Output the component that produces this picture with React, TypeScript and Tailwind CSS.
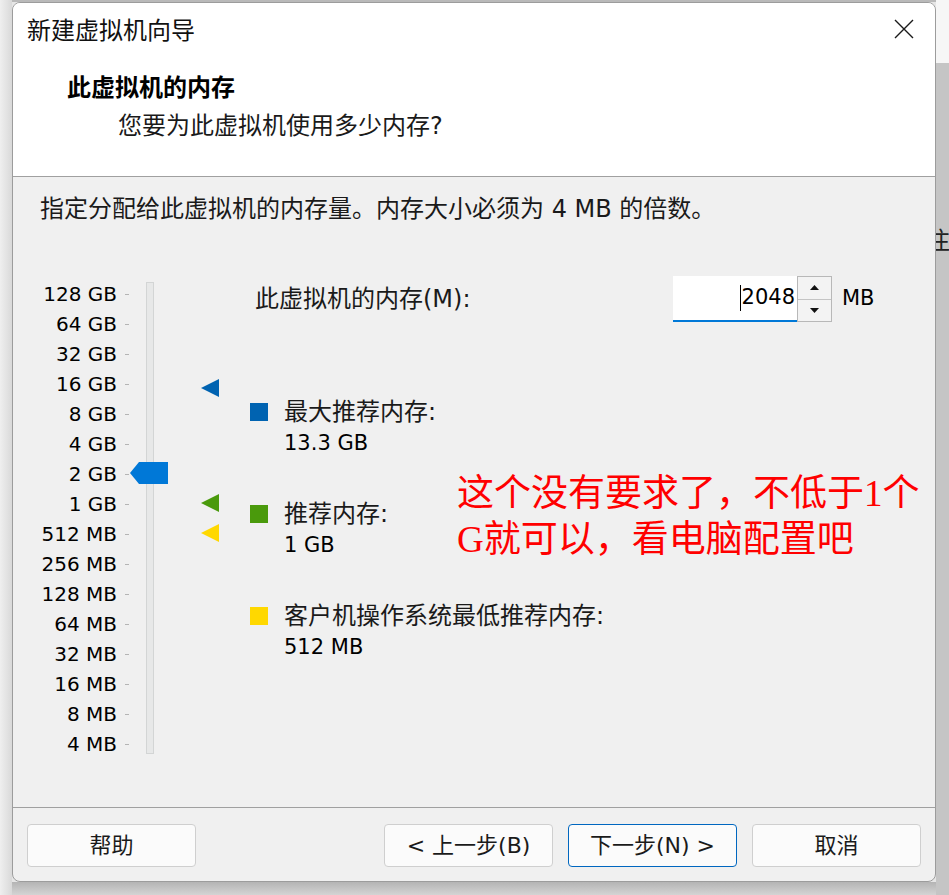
import React from 'react';

const SIZES = [
  '128 GB', '64 GB', '32 GB', '16 GB', '8 GB', '4 GB', '2 GB', '1 GB',
  '512 MB', '256 MB', '128 MB', '64 MB', '32 MB', '16 MB', '8 MB', '4 MB',
];

const ui = "font-['DejaVu_Sans','Noto_Sans_CJK_SC',sans-serif]";

const CloseIcon = () => (
  <svg width="20" height="20" viewBox="0 0 20 20" fill="none">
    <path d="M1 1L19 19M19 1L1 19" stroke="#1a1a1a" strokeWidth="1.4" />
  </svg>
);

const Marker = ({ color }: { color: string }) => (
  <svg width="18" height="18" viewBox="0 0 18 18">
    <polygon points="0,9 18,0 18,18" fill={color} />
  </svg>
);

function MemorySlider() {
  return (
    <div className="relative w-[237px] shrink-0 pt-[38px]">
      {SIZES.map((s) => (
        <div key={s} className="flex items-center h-[30px]">
          <span className="w-[104px] text-right text-[20px] leading-[30px] text-black">{s}</span>
          <span className="ml-[8px] w-[4px] h-px bg-[#b4b4b4]" />
        </div>
      ))}
      {/* track */}
      <div className="absolute left-[133px] top-[41px] w-[8px] h-[472px] bg-[#e7e8e8] border border-[#d3d5d5]" />
      {/* thumb */}
      <svg className="absolute left-[117px] top-[221px]" width="38" height="22" viewBox="0 0 38 22">
        <polygon points="0,11 9,0 38,0 38,22 9,22" fill="#0078d7" />
      </svg>
      <div className="absolute left-[188px] top-[138px]"><Marker color="#0063b1" /></div>
      <div className="absolute left-[188px] top-[253px]"><Marker color="#4a9a0c" /></div>
      <div className="absolute left-[188px] top-[283px]"><Marker color="#ffd800" /></div>
    </div>
  );
}

const LegendItem = ({ color, label, value }: { color: string; label: string; value: string }) => (
  <div className="flex">
    <div className={`w-[18px] h-[18px] mt-[6px] shrink-0 ${color}`} />
    <div className="ml-[16px]">
      <div className="h-[31px] leading-[31px] text-[24px] text-[#1a1a1a]">{label}</div>
      <div className="h-[31px] leading-[31px] text-[21px] text-black">{value}</div>
    </div>
  </div>
);

function Spinner() {
  return (
    <div className="flex flex-col w-[35px] h-[46px] border border-[#b8b8b8] bg-[#f3f3f3]">
      <div className="flex-1 flex items-center justify-center border-b border-[#c4c4c4]">
        <svg width="9" height="5" viewBox="0 0 9 5"><polygon points="0,5 4.5,0 9,5" fill="#111" /></svg>
      </div>
      <div className="flex-1 flex items-center justify-center">
        <svg width="9" height="5" viewBox="0 0 9 5"><polygon points="0,0 9,0 4.5,5" fill="#111" /></svg>
      </div>
    </div>
  );
}

const Btn = ({ children, primary }: { children: React.ReactNode; primary?: boolean }) => (
  <button
    type="button"
    className={`w-[169px] h-[43px] rounded-[4px] bg-[#fbfbfb] text-[22px] text-[#1a1a1a] flex items-center justify-center border ${
      primary ? 'border-[#0067c0]' : 'border-[#cfcfcf]'
    }`}
  >
    {children}
  </button>
);

export default function App() {
  return (
    <div className={`flex w-[949px] h-[895px] overflow-hidden bg-[#e6e6e6] ${ui}`}>
      <div className="w-[12px] shrink-0 bg-gradient-to-r from-[#efefef] to-[#d9d9d9]" />

      <div className="flex flex-col w-[924px] shrink-0">
        <div className="h-[2px] bg-[#b9b9b9]" />

        {/* dialog window */}
        <div className="h-[880px] flex flex-col rounded-[8px] border border-[#9c9c9c] overflow-hidden bg-[#f0f0f0]">
          {/* header */}
          <div className="h-[174px] shrink-0 bg-white border-b border-[#a0a0a0]">
            <div className="h-[56px] flex items-center justify-between pl-[14px] pr-[21px]">
              <span className="text-[24px] text-[#111]">新建虚拟机向导</span>
              <span className="mb-[4px]"><CloseIcon /></span>
            </div>
            <div className="mt-[14px] pl-[54px] leading-[30px] text-[24px] font-bold text-black">此虚拟机的内存</div>
            <div className="mt-[8px] pl-[105px] leading-[30px] text-[24px] text-[#1a1a1a]">您要为此虚拟机使用多少内存?</div>
          </div>

          {/* body */}
          <div className="relative h-[630px] shrink-0">
            <div className="h-[64px] pt-[17px] pl-[27px] leading-[30px] text-[24px] text-[#1a1a1a]">
              指定分配给此虚拟机的内存量。内存大小必须为 4 MB 的倍数。
            </div>
            <div className="flex">
              <MemorySlider />
              <div className="flex-1 flex flex-col">
                <div className="mt-[35px] h-[46px] flex items-center">
                  <span className="w-[423px] pl-[5px] text-[24px] text-[#1a1a1a]">此虚拟机的内存(M):</span>
                  <div className="relative w-[124px] h-[46px] bg-white border-b-2 border-[#0078d7] flex items-center justify-end pr-[2px]">
                    <span className="w-px h-[26px] bg-black mr-px" />
                    <span className="text-[21px] text-black">2048</span>
                  </div>
                  <Spinner />
                  <span className="ml-[10px] text-[21px] text-black">MB</span>
                </div>
                <div className="mt-[75px] flex flex-col gap-[40px]">
                  <LegendItem color="bg-[#0063b1]" label="最大推荐内存:" value="13.3 GB" />
                  <LegendItem color="bg-[#4a9a0c]" label="推荐内存:" value="1 GB" />
                  <LegendItem color="bg-[#ffd800]" label="客户机操作系统最低推荐内存:" value="512 MB" />
                </div>
              </div>
            </div>

            {/* red annotation */}
            <div className="absolute left-[444px] top-[294px] text-[37px] leading-[46px] text-[#ff0000] font-['Liberation_Serif','Noto_Sans_CJK_SC',serif] whitespace-nowrap">
              这个没有要求了，不低于1个
              <br />
              G就可以，看电脑配置吧
            </div>
          </div>

          {/* footer */}
          <div className="flex-1 border-t border-[#a0a0a0] flex items-start pt-[16px] pl-[14px] pr-[14px]">
            <Btn>帮助</Btn>
            <div className="flex-1" />
            <Btn>&lt; 上一步(B)</Btn>
            <div className="w-[15px]" />
            <Btn primary>下一步(N) &gt;</Btn>
            <div className="w-[15px]" />
            <Btn>取消</Btn>
          </div>
        </div>

        <div className="flex-1 bg-gradient-to-b from-[#b4b4b4] to-[#d4d4d4]" />
      </div>

      <div className="flex-1 flex flex-col">
        <div className="h-[63px] bg-[#f6f6f6]" />
        <div className="flex-1 bg-[#c5c5c5] overflow-hidden">
          <div className="mt-[158px] -ml-[10px] text-[24px] text-[#222] font-['Noto_Sans_CJK_SC',sans-serif]">注</div>
        </div>
      </div>
    </div>
  );
}
